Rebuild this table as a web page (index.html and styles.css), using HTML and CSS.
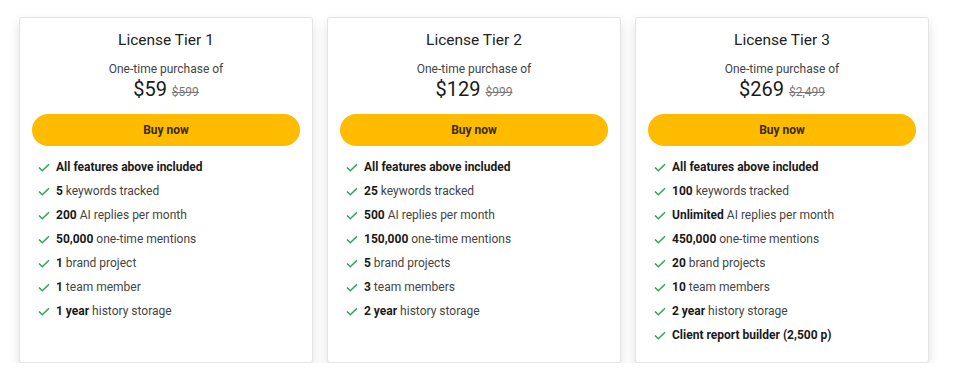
FILE: index.html
```html
<!DOCTYPE html>
<html lang="en">
  <head>
    <meta charset="UTF-8" />
    <meta name="viewport" content="width=device-width, initial-scale=1.0" />
    <title>Pricing</title>
    <link rel="stylesheet" href="styles.css">
  </head>
  <body>
    <div class="plans">
      <div class="plan-card">
        <div class="plan-title">License Tier 1</div>
        <div class="plan-sub">One-time purchase of</div>
        <div class="plan-price">$59 <s class="old-price">$599</s></div>
        <button class="buy-btn">Buy now</button>
        <ul class="features">
          <li><svg class="check" viewBox="0 0 12 9"><polyline points="1,4.5 4.3,7.8 11,1.2" /></svg><span><b>All features above included</b></span></li>
          <li><svg class="check" viewBox="0 0 12 9"><polyline points="1,4.5 4.3,7.8 11,1.2" /></svg><span><b>5</b> keywords tracked</span></li>
          <li><svg class="check" viewBox="0 0 12 9"><polyline points="1,4.5 4.3,7.8 11,1.2" /></svg><span><b>200</b> AI replies per month</span></li>
          <li><svg class="check" viewBox="0 0 12 9"><polyline points="1,4.5 4.3,7.8 11,1.2" /></svg><span><b>50,000</b> one-time mentions</span></li>
          <li><svg class="check" viewBox="0 0 12 9"><polyline points="1,4.5 4.3,7.8 11,1.2" /></svg><span><b>1</b> brand project</span></li>
          <li><svg class="check" viewBox="0 0 12 9"><polyline points="1,4.5 4.3,7.8 11,1.2" /></svg><span><b>1</b> team member</span></li>
          <li><svg class="check" viewBox="0 0 12 9"><polyline points="1,4.5 4.3,7.8 11,1.2" /></svg><span><b>1 year</b> history storage</span></li>
        </ul>
      </div>

      <div class="plan-card">
        <div class="plan-title">License Tier 2</div>
        <div class="plan-sub">One-time purchase of</div>
        <div class="plan-price">$129 <s class="old-price">$999</s></div>
        <button class="buy-btn">Buy now</button>
        <ul class="features">
          <li><svg class="check" viewBox="0 0 12 9"><polyline points="1,4.5 4.3,7.8 11,1.2" /></svg><span><b>All features above included</b></span></li>
          <li><svg class="check" viewBox="0 0 12 9"><polyline points="1,4.5 4.3,7.8 11,1.2" /></svg><span><b>25</b> keywords tracked</span></li>
          <li><svg class="check" viewBox="0 0 12 9"><polyline points="1,4.5 4.3,7.8 11,1.2" /></svg><span><b>500</b> AI replies per month</span></li>
          <li><svg class="check" viewBox="0 0 12 9"><polyline points="1,4.5 4.3,7.8 11,1.2" /></svg><span><b>150,000</b> one-time mentions</span></li>
          <li><svg class="check" viewBox="0 0 12 9"><polyline points="1,4.5 4.3,7.8 11,1.2" /></svg><span><b>5</b> brand projects</span></li>
          <li><svg class="check" viewBox="0 0 12 9"><polyline points="1,4.5 4.3,7.8 11,1.2" /></svg><span><b>3</b> team members</span></li>
          <li><svg class="check" viewBox="0 0 12 9"><polyline points="1,4.5 4.3,7.8 11,1.2" /></svg><span><b>2 year</b> history storage</span></li>
        </ul>
      </div>

      <div class="plan-card">
        <div class="plan-title">License Tier 3</div>
        <div class="plan-sub">One-time purchase of</div>
        <div class="plan-price">$269 <s class="old-price">$2,499</s></div>
        <button class="buy-btn">Buy now</button>
        <ul class="features">
          <li><svg class="check" viewBox="0 0 12 9"><polyline points="1,4.5 4.3,7.8 11,1.2" /></svg><span><b>All features above included</b></span></li>
          <li><svg class="check" viewBox="0 0 12 9"><polyline points="1,4.5 4.3,7.8 11,1.2" /></svg><span><b>100</b> keywords tracked</span></li>
          <li><svg class="check" viewBox="0 0 12 9"><polyline points="1,4.5 4.3,7.8 11,1.2" /></svg><span><b>Unlimited</b> AI replies per month</span></li>
          <li><svg class="check" viewBox="0 0 12 9"><polyline points="1,4.5 4.3,7.8 11,1.2" /></svg><span><b>450,000</b> one-time mentions</span></li>
          <li><svg class="check" viewBox="0 0 12 9"><polyline points="1,4.5 4.3,7.8 11,1.2" /></svg><span><b>20</b> brand projects</span></li>
          <li><svg class="check" viewBox="0 0 12 9"><polyline points="1,4.5 4.3,7.8 11,1.2" /></svg><span><b>10</b> team members</span></li>
          <li><svg class="check" viewBox="0 0 12 9"><polyline points="1,4.5 4.3,7.8 11,1.2" /></svg><span><b>2 year</b> history storage</span></li>
          <li><svg class="check" viewBox="0 0 12 9"><polyline points="1,4.5 4.3,7.8 11,1.2" /></svg><span><b>Client report builder (2,500 p)</b></span></li>
        </ul>
      </div>
    </div>
  </body>
</html>
```

FILE: styles.css
```css
/* Page */
body {
  margin: 0;
  background: #fff;
  font-family: Roboto, "Liberation Sans", Arial, sans-serif;
  color: #333;
}

.plans {
  display: flex;
  gap: 14px;
  padding: 17px 0 0 19px;
}

/* Cards */
.plan-card {
  width: 294px;
  box-sizing: border-box;
  padding: 11px 12px 15px;
  border: 1px solid #e4e4e4;
  border-radius: 3px;
  background: #fff;
  box-shadow: 0 5px 12px rgba(0, 0, 0, 0.12);
  display: flex;
  flex-direction: column;
}

.plan-title {
  font-size: 15.5px;
  line-height: 22px;
  text-align: center;
  color: #222;
}

.plan-sub {
  margin-top: 9px;
  font-size: 12px;
  line-height: 18px;
  text-align: center;
  color: #444;
}

.plan-price {
  height: 22px;
  font-size: 20px;
  line-height: 22px;
  text-align: center;
  color: #1a1a1a;
}

.old-price {
  font-size: 12px;
  color: #777;
}

.buy-btn {
  margin-top: 14px;
  height: 32px;
  flex-shrink: 0;
  border: none;
  border-radius: 16px;
  background: #ffbb00;
  color: #3a2a00;
  font-family: inherit;
  font-size: 12px;
  font-weight: bold;
  cursor: pointer;
}

/* Feature list */
.features {
  list-style: none;
  margin: 9px 0 0;
  padding: 0 0 0 6px;
}

.features li {
  display: flex;
  align-items: center;
  height: 24px;
  font-size: 12px;
  color: #444;
}

.features b {
  color: #1a1a1a;
}

.check {
  width: 12px;
  height: 9px;
  margin-right: 6px;
  fill: none;
  stroke: #27a851;
  stroke-width: 1.5;
}
```
